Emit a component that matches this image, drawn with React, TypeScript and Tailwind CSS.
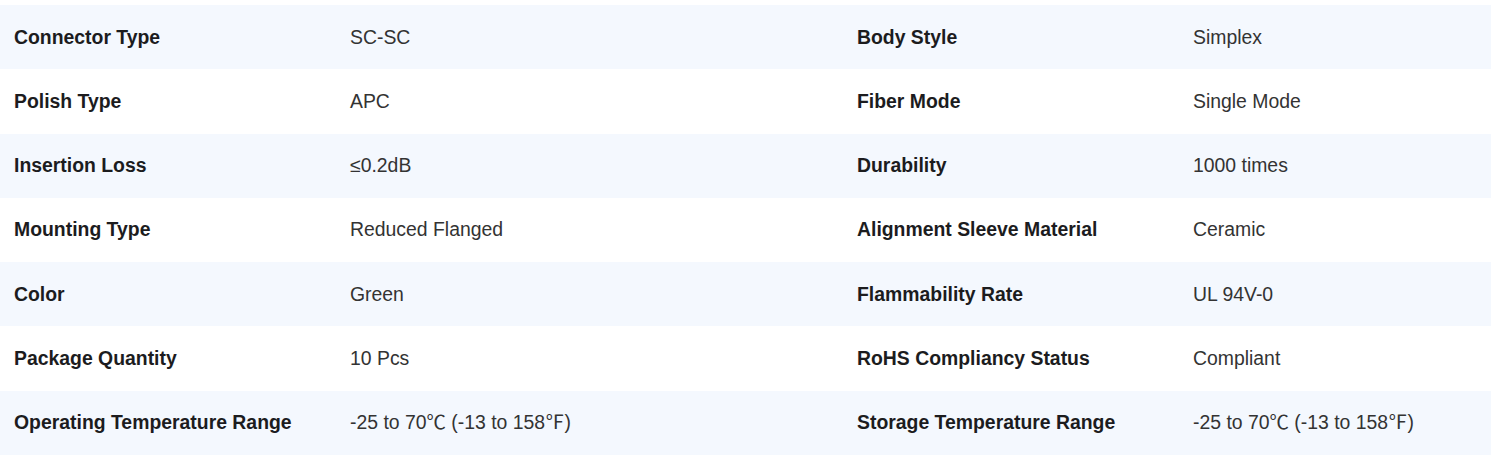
const SPECS: [string, string, string, string][] = [
  ['Connector Type', 'SC-SC', 'Body Style', 'Simplex'],
  ['Polish Type', 'APC', 'Fiber Mode', 'Single Mode'],
  ['Insertion Loss', '≤0.2dB', 'Durability', '1000 times'],
  ['Mounting Type', 'Reduced Flanged', 'Alignment Sleeve Material', 'Ceramic'],
  ['Color', 'Green', 'Flammability Rate', 'UL 94V-0'],
  ['Package Quantity', '10 Pcs', 'RoHS Compliancy Status', 'Compliant'],
  [
    'Operating Temperature Range',
    '-25 to 70℃ (-13 to 158℉)',
    'Storage Temperature Range',
    '-25 to 70℃ (-13 to 158℉)',
  ],
];

export default function App() {
  return (
    <div className="w-[1491px] h-[455px] bg-white pt-[5px] font-['Liberation_Sans','Noto_Sans_CJK_SC',sans-serif] text-[19.4px]">
      {SPECS.map(([l1, v1, l2, v2], i) => (
        <div
          key={l1}
          className={`grid grid-cols-[336px_507px_336px_1fr] items-center h-[64.3px] ${
            i % 2 === 0 ? 'bg-[#f4f8fe]' : 'bg-white'
          }`}
        >
          <div className="px-[14px] font-bold text-[#1c1c1e]">{l1}</div>
          <div className="px-[14px] text-[#333333]">{v1}</div>
          <div className="px-[14px] font-bold text-[#1c1c1e]">{l2}</div>
          <div className="px-[14px] text-[#333333]">{v2}</div>
        </div>
      ))}
    </div>
  );
}
